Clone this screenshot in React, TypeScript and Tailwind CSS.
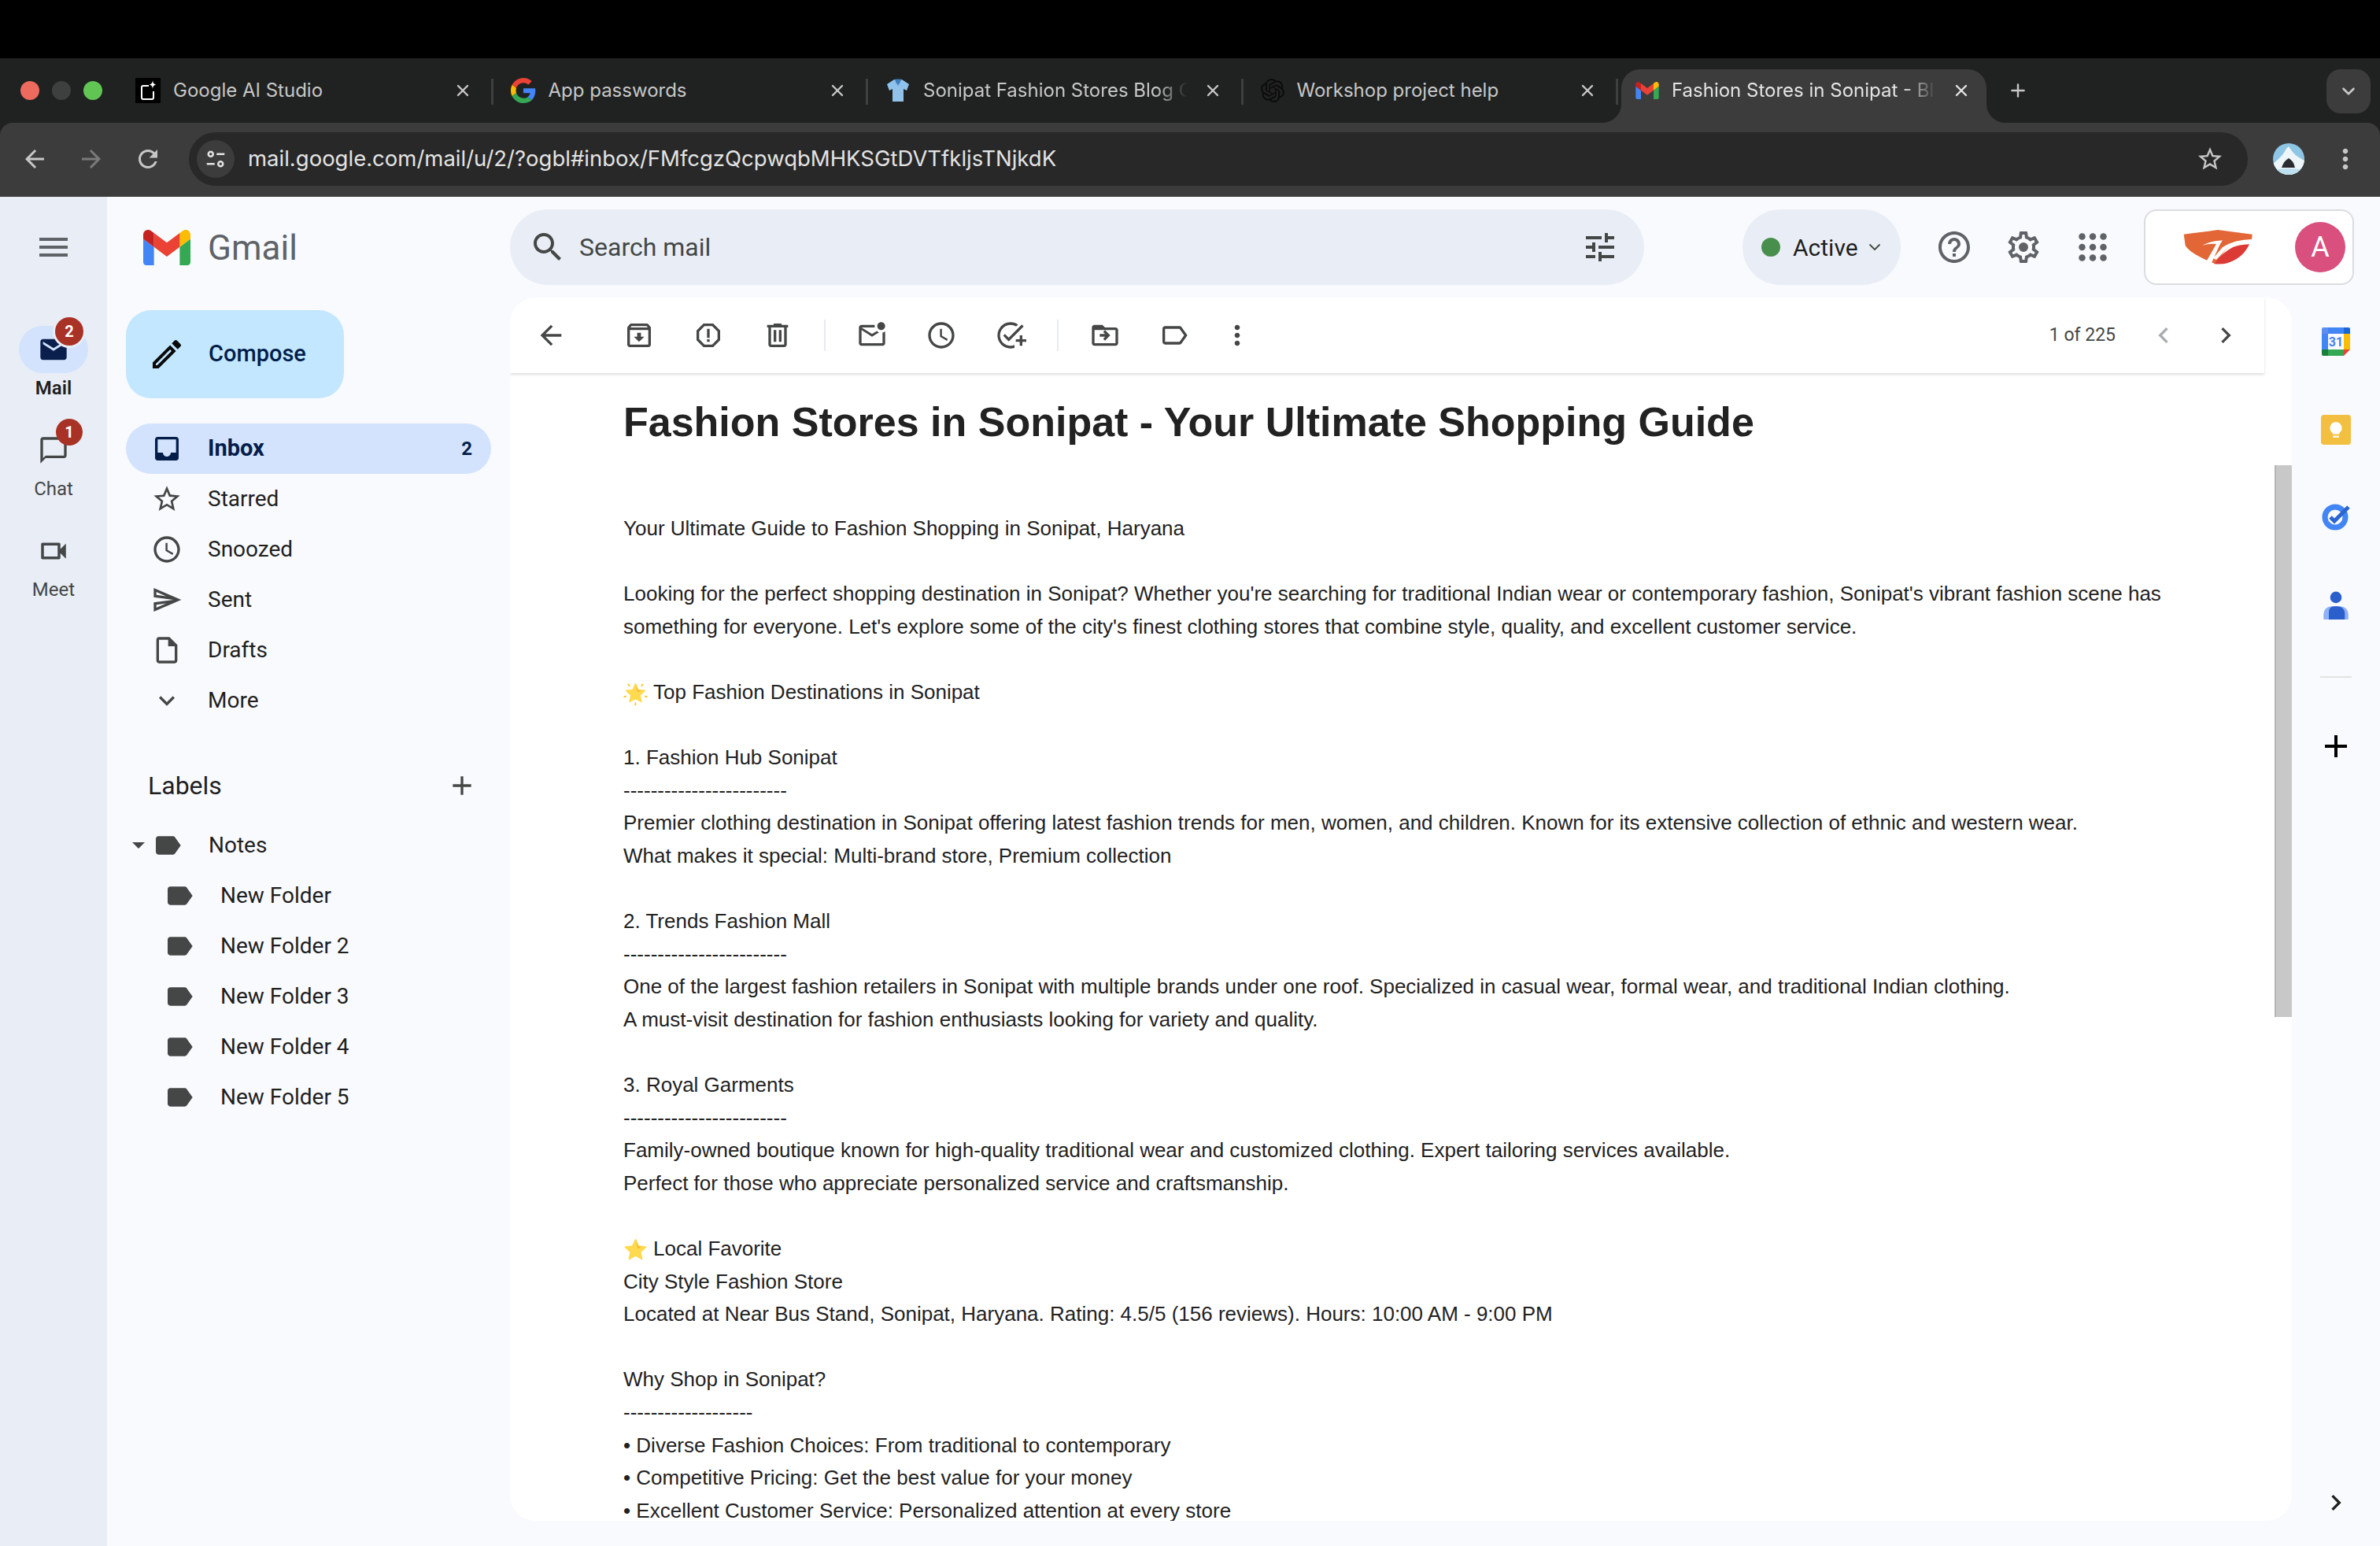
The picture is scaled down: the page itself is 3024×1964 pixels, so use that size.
import { X, Plus, ChevronDown } from "lucide-react";
import { SiOpenai } from "react-icons/si";

const P = {
  menu: "M3 18h18v-2H3v2zm0-5h18v-2H3v2zm0-7v2h18V6H3z",
  search:
    "M15.5 14h-.79l-.28-.27C15.41 12.59 16 11.11 16 9.5 16 5.91 13.09 3 9.5 3S3 5.91 3 9.5 5.91 16 9.5 16c1.61 0 3.09-.59 4.23-1.57l.27.28v.79l5 4.99L20.49 19l-4.99-5zm-6 0C7.01 14 5 11.99 5 9.5S7.01 5 9.5 5 14 7.01 14 9.5 11.99 14 9.5 14z",
  tune: "M3 17v2h6v-2H3zM3 5v2h10V5H3zm10 16v-2h8v-2h-8v-2h-2v6h2zM7 9v2H3v2h4v2h2V9H7zm14 4v-2H11v2h10zm-6-4h2V7h4V5h-4V3h-2v6z",
  help: "M11 18h2v-2h-2v2zm1-16C6.48 2 2 6.48 2 12s4.48 10 10 10 10-4.48 10-10S17.52 2 12 2zm0 18c-4.41 0-8-3.59-8-8s3.59-8 8-8 8 3.59 8 8-3.59 8-8 8zm0-14c-2.21 0-4 1.79-4 4h2c0-1.1.9-2 2-2s2 .9 2 2c0 2-3 1.75-3 5h2c0-2.25 3-2.5 3-5 0-2.21-1.79-4-4-4z",
  gear: "M19.43 12.98c.04-.32.07-.64.07-.98 0-.34-.03-.66-.07-.98l2.11-1.65c.19-.15.24-.42.12-.64l-2-3.46c-.09-.16-.26-.25-.44-.25-.06 0-.12.01-.17.03l-2.49 1c-.52-.4-1.08-.73-1.69-.98l-.38-2.65C14.46 2.18 14.25 2 14 2h-4c-.25 0-.46.18-.49.42l-.38 2.65c-.61.25-1.17.59-1.69.98l-2.49-1c-.06-.02-.12-.03-.18-.03-.17 0-.34.09-.43.25l-2 3.46c-.13.22-.07.49.12.64l2.11 1.65c-.04.32-.07.65-.07.98 0 .33.03.66.07.98l-2.11 1.65c-.19.15-.24.42-.12.64l2 3.46c.09.16.26.25.44.25.06 0 .12-.01.17-.03l2.49-1c.52.4 1.08.73 1.69.98l.38 2.65c.03.24.24.42.49.42h4c.25 0 .46-.18.49-.42l.38-2.65c.61-.25 1.17-.59 1.69-.98l2.49 1c.06.02.12.03.18.03.17 0 .34-.09.43-.25l2-3.46c.12-.22.07-.49-.12-.64l-2.11-1.65zm-1.98-1.71c.04.31.05.52.05.73 0 .21-.02.43-.05.73l-.14 1.13.89.7 1.08.84-.7 1.21-1.27-.51-1.04-.42-.9.68c-.43.32-.84.56-1.25.73l-1.06.43-.16 1.13-.2 1.35h-1.4l-.19-1.35-.16-1.13-1.06-.43c-.43-.18-.83-.41-1.23-.71l-.91-.7-1.06.43-1.27.51-.7-1.21 1.08-.84.89-.7-.14-1.13c-.03-.31-.05-.54-.05-.74s.02-.43.05-.73l.14-1.13-.89-.7-1.08-.84.7-1.21 1.27.51 1.04.42.9-.68c.43-.32.84-.56 1.25-.73l1.06-.43.16-1.13.2-1.35h1.39l.19 1.35.16 1.13 1.06.43c.43.18.83.41 1.23.71l.91.7 1.06-.43 1.27-.51.7 1.21-1.07.85-.89.7.14 1.13zM12 9a3 3 0 1 0 0 6 3 3 0 0 0 0-6z",
  inbox:
    "M19 3H5c-1.1 0-2 .9-2 2v14c0 1.1.9 2 2 2h14c1.1 0 2-.9 2-2V5c0-1.1-.9-2-2-2zm0 12h-4c0 1.66-1.35 3-3 3s-3-1.34-3-3H5V5h14v10z",
  star: "M22 9.24l-7.19-.62L12 2 9.19 8.63 2 9.24l5.46 4.73L5.82 21 12 17.27 18.18 21l-1.63-7.03L22 9.24zM12 15.4l-3.76 2.27 1-4.28-3.32-2.88 4.38-.38L12 6.1l1.71 4.04 4.38.38-3.32 2.88 1 4.28L12 15.4z",
  clock:
    "M11.99 2C6.47 2 2 6.48 2 12s4.47 10 9.99 10C17.52 22 22 17.52 22 12S17.52 2 11.99 2zM12 20c-4.42 0-8-3.58-8-8s3.58-8 8-8 8 3.58 8 8-3.58 8-8 8zm.5-13H11v6l5.25 3.15.75-1.23-4.5-2.67z",
  send: "M4.01 6.03l7.51 3.22-7.52-1 .01-2.22m7.5 8.72L4 17.97v-2.22l7.51-1M2.01 3L2 10l15 2-15 2 .01 7L23 12 2.01 3z",
  draft:
    "M14 2H6c-1.1 0-2 .9-2 2v16c0 1.1.9 2 2 2h12c1.1 0 2-.9 2-2V8l-6-6zm4 18H6V4h7v5h5z",
  expand: "M16.59 8.59L12 13.17 7.41 8.59 6 10l6 6 6-6z",
  label:
    "M17.63 5.84C17.27 5.33 16.67 5 16 5L5 5.01C3.9 5.01 3 5.9 3 7v10c0 1.1.9 1.99 2 1.99L16 19c.67 0 1.27-.33 1.63-.84L22 12l-4.37-6.16z",
  labelOutline:
    "M17.63 5.84C17.27 5.33 16.67 5 16 5L5 5.01C3.9 5.01 3 5.9 3 7v10c0 1.1.9 1.99 2 1.99L16 19c.67 0 1.27-.33 1.63-.84L22 12l-4.37-6.16zM16 17H5V7h11l3.55 5L16 17z",
  plus: "M19 13h-6v6h-2v-6H5v-2h6V5h2v6h6v2z",
  back: "M20 11H7.83l5.59-5.59L12 4l-8 8 8 8 1.41-1.41L7.83 13H20v-2z",
  forward: "M4 11h12.17l-5.59-5.59L12 4l8 8-8 8-1.41-1.41L16.17 13H4v-2z",
  archive:
    "M20.54 5.23l-1.39-1.68C18.88 3.21 18.47 3 18 3H6c-.47 0-.88.21-1.16.55L3.46 5.23C3.17 5.57 3 6.02 3 6.5V19c0 1.1.9 2 2 2h14c1.1 0 2-.9 2-2V6.5c0-.48-.17-.93-.46-1.27zM6.24 5h11.52l.83 1H5.42l.82-1zM5 19V8h14v11H5zm8.45-9h-2.9v3H8l4 4 4-4h-2.55z",
  report:
    "M15.73 3H8.27L3 8.27v7.46L8.27 21h7.46L21 15.73V8.27L15.73 3zM19 14.9L14.9 19H9.1L5 14.9V9.1L9.1 5h5.8L19 9.1v5.8zM11 7h2v7h-2zM11 15h2v2h-2z",
  trash:
    "M15 4V3H9v1H4v2h1v13c0 1.1.9 2 2 2h10c1.1 0 2-.9 2-2V6h1V4h-5zm2 15H7V6h10v13zM9 8h2v9H9zm4 0h2v9h-2z",
  unread:
    "M22 8.98V18c0 1.1-.9 2-2 2H4c-1.1 0-2-.9-2-2V6c0-1.1.9-2 2-2h10.1c-.06.32-.1.66-.1 1s.04.68.1 1H4l8 5 3.67-2.29c.47.43 1.02.76 1.63.98L12 13 4 8v10h16V9.9c.74-.15 1.42-.48 2-.92zM16 5c0 1.66 1.34 3 3 3s3-1.34 3-3-1.34-3-3-3-3 1.34-3 3z",
  addTask:
    "M22 5.18L10.59 16.6l-4.24-4.24 1.41-1.41 2.83 2.83 10-10L22 5.18zM12 20c-4.42 0-8-3.58-8-8s3.58-8 8-8c1.58 0 3.04.46 4.28 1.25l1.44-1.44C16.1 2.67 14.13 2 12 2 6.48 2 2 6.48 2 12s4.48 10 10 10c1.05 0 2.05-.16 3-.46v-2.12c-.93.37-1.94.58-3 .58zM19 15v-3h2v3h3v2h-3v3h-2v-3h-3v-2h3z",
  move: "M20 6h-8l-2-2H4c-1.1 0-2 .9-2 2v12c0 1.1.9 2 2 2h16c1.1 0 2-.9 2-2V8c0-1.1-.9-2-2-2zm0 12H4V8h16v10zm-8-2l4-4-4-4-1.41 1.41L12.17 11H8v2h4.17l-1.58 1.59L12 16z",
  more: "M12 8c1.1 0 2-.9 2-2s-.9-2-2-2-2 .9-2 2 .9 2 2 2zm0 2c-1.1 0-2 .9-2 2s.9 2 2 2 2-.9 2-2-.9-2-2-2zm0 6c-1.1 0-2 .9-2 2s.9 2 2 2 2-.9 2-2-.9-2-2-2z",
  prev: "M15.41 7.41L14 6l-6 6 6 6 1.41-1.41L10.83 12z",
  next: "M10 6L8.59 7.41 13.17 12l-4.58 4.59L10 18l6-6z",
  mail: "M20 4H4c-1.1 0-2 .9-2 2v12c0 1.1.9 2 2 2h16c1.1 0 2-.9 2-2V6c0-1.1-.9-2-2-2zm0 4l-8 5-8-5V6l8 5 8-5v2z",
  chat: "M20 2H4c-1.1 0-2 .9-2 2v18l4-4h14c1.1 0 2-.9 2-2V4c0-1.1-.9-2-2-2zm0 14H6l-2 2V4h16v12z",
  video:
    "M17 10.5V7c0-.55-.45-1-1-1H4c-.55 0-1 .45-1 1v10c0 .55.45 1 1 1h12c.55 0 1-.45 1-1v-3.5l4 4v-11l-4 4zM15 16H5V8h10v8z",
  edit: "M14.06 9.02l.92.92L5.92 19H5v-.92l9.06-9.06M17.66 3c-.25 0-.51.1-.7.29l-1.83 1.83 3.75 3.75 1.83-1.83c.39-.39.39-1.02 0-1.41l-2.34-2.34c-.2-.2-.45-.29-.71-.29zm-3.6 3.19L3 17.25V21h3.75L17.81 9.94l-3.75-3.75z",
  reload:
    "M17.65 6.35C16.2 4.9 14.21 4 12 4c-4.42 0-7.99 3.58-7.99 8s3.57 8 7.99 8c3.73 0 6.84-2.55 7.73-6h-2.08c-.82 2.33-3.04 4-5.65 4-3.31 0-6-2.69-6-6s2.69-6 6-6c1.66 0 3.14.69 4.22 1.78L13 11h7V4l-2.35 2.35z",
};

function Mi({ d, className }: { d: string; className?: string }) {
  return (
    <svg viewBox="0 0 24 24" fill="currentColor" className={className}>
      <path d={d} />
    </svg>
  );
}

function GmailM({ className }: { className?: string }) {
  return (
    <svg viewBox="52 42 88 66" className={className}>
      <path fill="#4285f4" d="M58 108h14V74L52 59v43c0 3.32 2.69 6 6 6" />
      <path fill="#34a853" d="M120 108h14c3.32 0 6-2.69 6-6V59l-20 15" />
      <path fill="#fbbc04" d="M120 48v26l20-15v-8c0-7.42-8.47-11.65-14.4-7.2" />
      <path fill="#ea4335" d="M72 74V48l24 18 24-18v26L96 92" />
      <path fill="#c5221f" d="M52 51v8l20 15V48l-5.6-4.2c-5.94-4.45-14.4-.22-14.4 7.2" />
    </svg>
  );
}

function GoogleG() {
  return (
    <svg viewBox="0 0 48 48" className="w-[32px] h-[32px] shrink-0">
      <path fill="#EA4335" d="M24 9.5c3.54 0 6.71 1.22 9.21 3.6l6.85-6.85C35.9 2.38 30.47 0 24 0 14.62 0 6.51 5.38 2.56 13.22l7.98 6.19C12.43 13.72 17.74 9.5 24 9.5z" />
      <path fill="#4285F4" d="M46.98 24.55c0-1.57-.15-3.09-.38-4.55H24v9.02h12.94c-.58 2.96-2.26 5.48-4.78 7.18l7.73 6c4.51-4.18 7.09-10.36 7.09-17.65z" />
      <path fill="#FBBC05" d="M10.53 28.59c-.48-1.45-.76-2.99-.76-4.59s.27-3.14.76-4.59l-7.98-6.19C.92 16.46 0 20.12 0 24c0 3.88.92 7.54 2.56 10.78l7.97-6.19z" />
      <path fill="#34A853" d="M24 48c6.48 0 11.93-2.13 15.89-5.81l-7.73-6c-2.15 1.45-4.92 2.3-8.16 2.3-6.26 0-11.57-4.22-13.47-9.91l-7.98 6.19C6.51 42.62 14.62 48 24 48z" />
    </svg>
  );
}

function StudioIcon() {
  return (
    <svg viewBox="0 0 32 32" className="w-[32px] h-[32px] shrink-0">
      <rect width="32" height="32" fill="#000" />
      <path d="M17 10H10a2 2 0 0 0-2 2v13a2 2 0 0 0 2 2h11a2 2 0 0 0 2-2V17" fill="none" stroke="#fff" strokeWidth="2" />
      <path d="M22 3c.4 3.6 1.4 4.8 4.5 5.500-3.100.7-4.100 1.900-4.500 5.500-.4-3.600-1.400-4.800-4.500-5.500C20.600 7.800 21.600 6.600 22 3z" fill="#fff" />
    </svg>
  );
}

function ShirtIcon() {
  return (
    <svg viewBox="0 0 32 32" className="w-[32px] h-[32px] shrink-0">
      <path d="M11 2l5 2 5-2 9 6-3 8-4-2v16H9V14l-4 2-3-8z" fill="#90c2ec" />
      <path d="M12 1.500h8l-2 6h-1l-1 3-1-3h-1z" fill="#3f7fbd" />
    </svg>
  );
}

function Tab({ title, icon, fade }: { title: string; icon: React.ReactNode; fade?: boolean }) {
  return (
    <div className="flex items-center w-[476.5px] h-[68px] shrink-0 pl-[22px] pr-[24px] pb-[14px] border-r-[3px] border-[#3e4040] [border-image:linear-gradient(transparent_18%,#3e4040_18%,#3e4040_65%,transparent_65%)_1]">
      {icon}
      <span
        className={
          fade
            ? "ml-[16px] w-[336px] overflow-hidden whitespace-nowrap text-[24px] text-[#c7c7c7] [mask-image:linear-gradient(to_right,black_88%,transparent)]"
            : "ml-[16px] w-[336px] whitespace-nowrap text-[24px] text-[#c7c7c7]"
        }
      >
        {title}
      </span>
      <X className="ml-auto w-[24px] h-[24px] text-[#c7c7c7]" strokeWidth={2.4} />
    </div>
  );
}

function ChromeBar() {
  return (
    <div className="bg-[#202221] font-['Inter',sans-serif]">
      <div className="flex h-[82px] bg-[#3c3c3c]">
        <div className="flex w-[2060px] pt-[14px] bg-[#202221] rounded-br-[24px]">
          <div className="flex items-start w-[150px] pt-[15px] pl-[26px] gap-[16px]">
            <div className="w-[24px] h-[24px] rounded-full bg-[#ec6a5e]" />
            <div className="w-[24px] h-[24px] rounded-full bg-[#3e4040]" />
            <div className="w-[24px] h-[24px] rounded-full bg-[#61c554]" />
          </div>
          <Tab title="Google AI Studio" icon={<StudioIcon />} />
          <Tab title="App passwords" icon={<GoogleG />} />
          <Tab title="Sonipat Fashion Stores Blog Generator" icon={<ShirtIcon />} fade />
          <Tab title="Workshop project help" icon={<SiOpenai className="w-[30px] h-[32px] shrink-0 text-[#0b0b0b]" />} />
        </div>
        <div className="w-[464px] pt-[14px] bg-[#202221]">
          <div className="flex items-center h-[68px] pl-[18px] pr-[20px] pb-[14px] bg-[#3c3c3c] rounded-t-[24px]">
            <GmailM className="w-[30px] h-[22px] shrink-0" />
            <span className="ml-[16px] w-[336px] overflow-hidden whitespace-nowrap text-[24px] text-[#e3e3e3] [mask-image:linear-gradient(to_right,black_88%,transparent)]">
              Fashion Stores in Sonipat - Blog
            </span>
            <X className="ml-auto w-[24px] h-[24px] text-[#e3e3e3]" strokeWidth={2.4} />
          </div>
        </div>
        <div className="flex items-start flex-1 pt-[14px] bg-[#202221] rounded-bl-[24px]">
          <Plus className="mt-[14px] ml-[27px] w-[26px] h-[26px] text-[#c7c7c7]" strokeWidth={2.2} />
          <div className="flex items-center justify-center ml-[379px] w-[56px] h-[56px] rounded-[18px] bg-[#3c3c3c]">
            <ChevronDown className="w-[26px] h-[26px] text-[#c7c7c7]" strokeWidth={2.4} />
          </div>
        </div>
      </div>
      <div className="flex items-center h-[94px] pb-[2px] bg-[#3c3c3c] rounded-t-[16px]">
        <Mi d={P.back} className="ml-[26px] w-[36px] h-[36px] text-[#c7c7c7]" />
        <Mi d={P.forward} className="ml-[36px] w-[36px] h-[36px] text-[#7a7a7a]" />
        <Mi d={P.reload} className="ml-[36px] w-[36px] h-[36px] text-[#c7c7c7]" />
        <div className="flex items-center ml-[34px] w-[2616px] h-[68px] pl-[10px] pr-[30px] rounded-full bg-[#282828]">
          <div className="flex items-center justify-center w-[48px] h-[48px] rounded-full bg-[#3c3c3c]">
            <svg viewBox="0 0 24 24" className="w-[30px] h-[30px]" fill="none" stroke="#e3e3e3" strokeWidth="2">
              <circle cx="7" cy="7" r="2.4" />
              <path d="M13 7h8M3 17h8" />
              <circle cx="17" cy="17" r="2.4" />
            </svg>
          </div>
          <span className="ml-[17px] whitespace-nowrap text-[27.5px] text-[#e3e3e3]">
            mail.google.com/mail/u/2/?ogbl#inbox/FMfcgzQcpwqbMHKSGtDVTfkljsTNjkdK
          </span>
          <Mi d={P.star} className="ml-auto w-[36px] h-[36px] text-[#c7c7c7]" />
        </div>
        <svg viewBox="0 0 40 40" className="ml-[32px] w-[40px] h-[40px] rounded-full shrink-0">
          <rect width="40" height="40" fill="#8ec6e6" />
          <path d="M0 26q10-8 14-14 3-6 6-8 5 8 10 12 6 4 10 6v18H0z" fill="#eef6fa" />
          <path d="M11 31q3-9 9-12 6 3 8 12z" fill="#2a2c30" />
          <path d="M0 34q20-4 40 0v6H0z" fill="#bfe0ef" />
        </svg>
        <Mi d={P.more} className="ml-[32px] w-[40px] h-[40px] text-[#c7c7c7]" />
      </div>
    </div>
  );
}

function LeftRail() {
  return (
    <div className="flex flex-col items-center w-[136px] shrink-0 bg-[#e9eef6] text-[24px] text-[#444746]">
      <div className="flex items-center justify-center h-[128px]">
        <Mi d={P.menu} className="w-[48px] h-[48px] text-[#5f6368]" />
      </div>
      <div className="relative flex flex-col items-center h-[128px] mt-[36px] w-full">
        <div className="flex items-center justify-center w-[88px] h-[60px] rounded-full bg-[#d3e3fd]">
          <Mi d={P.mail} className="w-[40px] h-[40px] text-[#0b1f4d]" />
        </div>
        <span className="mt-[1px] leading-[36px] font-semibold text-[#1f1f1f]">Mail</span>
        <span className="absolute left-[70px] top-[-11px] flex items-center justify-center w-[36px] h-[36px] rounded-full bg-[#a93226] text-[20px] font-bold leading-none text-white ring-[3px] ring-[#e9eef6]">
          2
        </span>
      </div>
      <div className="relative flex flex-col items-center h-[128px] w-full">
        <div className="flex items-center justify-center w-[88px] h-[60px]">
          <Mi d={P.chat} className="w-[40px] h-[40px]" />
        </div>
        <span className="mt-[1px] leading-[36px]">Chat</span>
        <span className="absolute left-[71px] top-[-10px] flex items-center justify-center w-[34px] h-[34px] rounded-full bg-[#a93226] text-[20px] font-bold leading-none text-white">
          1
        </span>
      </div>
      <div className="flex flex-col items-center h-[128px] w-full">
        <div className="flex items-center justify-center w-[88px] h-[60px]">
          <Mi d={P.video} className="w-[42px] h-[42px]" />
        </div>
        <span className="mt-[1px] leading-[36px]">Meet</span>
      </div>
    </div>
  );
}

const navItems = [
  { name: "Starred", d: P.star },
  { name: "Snoozed", d: P.clock },
  { name: "Sent", d: P.send },
  { name: "Drafts", d: P.draft },
  { name: "More", d: P.expand },
];

const folders = ["New Folder", "New Folder 2", "New Folder 3", "New Folder 4", "New Folder 5"];

function Sidebar() {
  return (
    <div className="w-[512px] shrink-0 text-[28px] text-[#1f1f1f]">
      <div className="flex items-center mt-[16px] ml-[24px] w-[277px] h-[112px] pl-[28px] rounded-[32px] bg-[#c2e7ff]">
        <Mi d={P.edit} className="w-[48px] h-[48px] text-[#0a0a0a]" />
        <span className="ml-[29px] text-[29px] font-medium text-[#041e49]">Compose</span>
      </div>
      <div className="flex items-center mt-[32px] ml-[24px] w-[464px] h-[64px] pl-[32px] pr-[24px] rounded-full bg-[#d3e3fd] font-bold text-[#041e49]">
        <Mi d={P.inbox} className="w-[40px] h-[40px]" />
        <span className="ml-[32px] text-[29px]">Inbox</span>
        <span className="ml-auto text-[24px]">2</span>
      </div>
      {navItems.map((item) => (
        <div key={item.name} className="flex items-center ml-[24px] h-[64px] pl-[32px]">
          <Mi d={item.d} className="w-[40px] h-[40px] text-[#444746]" />
          <span className="ml-[32px]">{item.name}</span>
        </div>
      ))}
      <div className="flex items-center justify-between mt-[44px] ml-[52px] w-[419px] h-[64px] text-[32px]">
        <span>Labels</span>
        <Mi d={P.plus} className="w-[40px] h-[40px] text-[#444746]" />
      </div>
      <div className="flex items-center mt-[12px] ml-[32px] h-[64px]">
        <div className="w-0 h-0 border-x-[8px] border-t-[8px] border-x-transparent border-t-[#444746]" />
        <Mi d={P.label} className="ml-[9px] w-[40px] h-[40px] text-[#444746]" />
        <span className="ml-[32px]">Notes</span>
      </div>
      {folders.map((name) => (
        <div key={name} className="flex items-center ml-[72px] h-[64px]">
          <Mi d={P.label} className="w-[40px] h-[40px] text-[#444746]" />
          <span className="ml-[32px]">{name}</span>
        </div>
      ))}
    </div>
  );
}

function ToolIcon({ d }: { d: string }) {
  return (
    <div className="flex items-center justify-center w-[88px] h-[88px] shrink-0">
      <Mi d={d} className="w-[40px] h-[40px] text-[#444746]" />
    </div>
  );
}

const bodyLines = [
  "Your Ultimate Guide to Fashion Shopping in Sonipat, Haryana",
  "",
  "Looking for the perfect shopping destination in Sonipat? Whether you're searching for traditional Indian wear or contemporary fashion, Sonipat's vibrant fashion scene has",
  "something for everyone. Let's explore some of the city's finest clothing stores that combine style, quality, and excellent customer service.",
  "",
  "*Top Fashion Destinations in Sonipat",
  "",
  "1. Fashion Hub Sonipat",
  "------------------------",
  "Premier clothing destination in Sonipat offering latest fashion trends for men, women, and children. Known for its extensive collection of ethnic and western wear.",
  "What makes it special: Multi-brand store, Premium collection",
  "",
  "2. Trends Fashion Mall",
  "------------------------",
  "One of the largest fashion retailers in Sonipat with multiple brands under one roof. Specialized in casual wear, formal wear, and traditional Indian clothing.",
  "A must-visit destination for fashion enthusiasts looking for variety and quality.",
  "",
  "3. Royal Garments",
  "------------------------",
  "Family-owned boutique known for high-quality traditional wear and customized clothing. Expert tailoring services available.",
  "Perfect for those who appreciate personalized service and craftsmanship.",
  "",
  "#Local Favorite",
  "City Style Fashion Store",
  "Located at Near Bus Stand, Sonipat, Haryana. Rating: 4.5/5 (156 reviews). Hours: 10:00 AM - 9:00 PM",
  "",
  "Why Shop in Sonipat?",
  "-------------------",
  "• Diverse Fashion Choices: From traditional to contemporary",
  "• Competitive Pricing: Get the best value for your money",
  "• Excellent Customer Service: Personalized attention at every store",
];

function Star({ glow }: { glow?: boolean }) {
  const shape = (
    <>
      <path
        d="M16 3L19.8 11.7 29.3 12.7 22.2 19 24.2 28.3 16 23.500 7.800 28.300 9.800 19 2.700 12.700 12.200 11.700z"
        fill="#ffd94f"
        stroke="#ffd94f"
        strokeWidth="2"
        strokeLinejoin="round"
      />
      <path d="M16.500 4.500L19.800 11.700 24 12.200 19 15z" fill="#f2b92f" />
    </>
  );
  return (
    <svg viewBox="0 0 32 32" className="inline-block align-[-8px] mr-[7px] w-[31px] h-[31px]">
      {glow ? (
        <>
          <g transform="translate(1.400 1.300) scale(.91)">{shape}</g>
          <path d="M16 28.500V32M6 4l2.500 3M26 4l-2.500 3M.5 21l3.500-1M31.500 21l-3.500-1" stroke="#fcc21b" strokeWidth="1.800" fill="none" />
        </>
      ) : (
        shape
      )}
    </svg>
  );
}

function BodyLine({ text }: { text: string }) {
  if (text === "") return <div className="h-[41.6px]" />;
  if (text[0] === "*" || text[0] === "#") {
    return (
      <div className="h-[41.6px] whitespace-nowrap">
        <Star glow={text[0] === "*"} />
        {text.slice(1)}
      </div>
    );
  }
  return <div className="h-[41.6px] whitespace-nowrap">{text}</div>;
}

function MailCard() {
  return (
    <div className="flex w-[2264px] h-[1554px] shrink-0 overflow-hidden rounded-[32px] bg-white">
      <div className="flex flex-col w-[2229px] shrink-0">
        <div className="flex items-center h-[96px] shrink-0 pl-[8px] pr-[29px] shadow-[0_2px_3px_rgba(60,64,67,0.18)]">
          <ToolIcon d={P.back} />
          <div className="w-[24px]" />
          <ToolIcon d={P.archive} />
          <ToolIcon d={P.report} />
          <ToolIcon d={P.trash} />
          <div className="w-[2px] h-[40px] mx-[15px] bg-[#e8eaed]" />
          <ToolIcon d={P.unread} />
          <ToolIcon d={P.clock} />
          <ToolIcon d={P.addTask} />
          <div className="w-[2px] h-[40px] mx-[15px] bg-[#e8eaed]" />
          <ToolIcon d={P.move} />
          <ToolIcon d={P.labelOutline} />
          <div className="flex items-center justify-center w-[72px] h-[88px] shrink-0">
            <Mi d={P.more} className="w-[40px] h-[40px] text-[#444746]" />
          </div>
          <span className="ml-auto font-['Roboto',sans-serif] text-[23px] text-[#444746]">1 of 225</span>
          <Mi d={P.prev} className="ml-[41px] w-[40px] h-[40px] text-[#a8abaf]" />
          <Mi d={P.next} className="ml-[39px] w-[40px] h-[40px] text-[#444746]" />
        </div>
        <div className="flex-1 overflow-hidden pl-[144px] pt-[32px] font-['Liberation_Sans',Arial,sans-serif] text-[26px] leading-[41.6px] text-[#222222]">
          <h1 className="h-[60px] text-[52px] font-bold leading-[60px] whitespace-nowrap">
            Fashion Stores in Sonipat - Your Ultimate Shopping Guide
          </h1>
          <div className="mt-[85px]">
            {bodyLines.map((line, i) => (
              <BodyLine key={i} text={line} />
            ))}
          </div>
        </div>
      </div>
      <div className="ml-[13px] mt-[213px] w-[22px] h-[701px] bg-[#c8c8c8] border-l-2 border-[#b4b4b4]" />
    </div>
  );
}

function RightRail() {
  return (
    <div className="flex flex-col items-center w-[112px] shrink-0 text-black">
      <svg viewBox="0 0 36 36" className="mt-[37px] w-[36px] h-[38px]">
        <path d="M8 0h20v8H8z" fill="#4285f4" />
        <path d="M0 8a8 8 0 0 1 8-8v28H0z" fill="#4285f4" />
        <path d="M2 0h6v8H0V2a2 2 0 0 1 2-2z" fill="#5a8fef" />
        <path d="M28 0h6a2 2 0 0 1 2 2v6h-8z" fill="#1967d2" />
        <path d="M28 8h8v20h-8z" fill="#fbbc04" />
        <path d="M8 28h20v8H8z" fill="#34a853" />
        <path d="M0 28h8v8H2a2 2 0 0 1-2-2z" fill="#188038" />
        <path d="M28 28h8l-8 8z" fill="#ea4335" />
        <text x="18" y="24" fontSize="16" fontWeight="700" textAnchor="middle" fill="#4285f4" fontFamily="Roboto">31</text>
      </svg>
      <div className="flex items-center justify-center mt-[74px] w-[38px] h-[38px] rounded-[4px] bg-[#f3bf41]">
        <svg viewBox="0 0 24 24" className="w-[26px] h-[26px]" fill="#fff">
          <path d="M12 3a7 7 0 0 0-4 12.700V17h8v-1.300A7 7 0 0 0 12 3z" />
          <path d="M8.500 19h7v2h-7z" />
        </svg>
      </div>
      <svg viewBox="0 0 36 36" className="mt-[73px] w-[36px] h-[36px]">
        <circle cx="17" cy="19" r="13" fill="none" stroke="#4285f4" strokeWidth="7" />
        <path d="M11 19l5 5 18-18" fill="none" stroke="#2b66d0" strokeWidth="5" />
      </svg>
      <svg viewBox="0 0 32 32" className="mt-[77px] w-[36px] h-[36px]">
        <circle cx="16" cy="7" r="6.500" fill="#2b5fcb" />
        <path d="M2 32v-6a9 9 0 0 1 9-9h10a9 9 0 0 1 9 9v6z" fill="#8fb1f7" />
        <path d="M8 32V23a6 6 0 0 1 6-6h4a8 8 0 0 1 8 8v7z" fill="#2b5fcb" />
      </svg>
      <div className="mt-[72px] w-[40px] h-[2px] bg-[#e3e3e3]" />
      <Mi d={P.plus} className="mt-[63px] w-[48px] h-[48px]" />
      <Mi d={P.next} className="mt-[917px] w-[40px] h-[40px] text-[#1f1f1f]" />
    </div>
  );
}

function Header() {
  return (
    <div className="flex h-[128px] shrink-0 font-['Roboto',sans-serif]">
      <div className="flex items-center w-[512px] shrink-0 pl-[46px]">
        <GmailM className="w-[60px] h-[45px]" />
        <span className="ml-[22px] pt-[2px] text-[44px] leading-none text-[#5f6368]">Gmail</span>
      </div>
      <div className="flex items-center mt-[16px] w-[1441px] h-[96px] shrink-0 pl-[24px] pr-[32px] rounded-full bg-[#e9eef6]">
        <Mi d={P.search} className="w-[48px] h-[48px] text-[#444746]" />
        <span className="ml-[16px] text-[32px] text-[#444746]">Search mail</span>
        <Mi d={P.tune} className="ml-auto w-[48px] h-[48px] text-[#444746]" />
      </div>
      <div className="flex items-center mt-[16px] ml-[125px] w-[201px] h-[96px] shrink-0 pl-[24px] rounded-full bg-[#e9eef6]">
        <div className="w-[24px] h-[24px] rounded-full bg-[#488e4c]" />
        <span className="ml-[16px] text-[30px] text-[#1f1f1f]">Active</span>
        <ChevronDown className="ml-[9px] w-[24px] h-[24px] text-[#444746]" strokeWidth={1.8} />
      </div>
      <div className="flex items-center justify-center ml-[24px] w-[88px] h-[128px] shrink-0">
        <Mi d={P.help} className="w-[48px] h-[48px] text-[#5f6368]" />
      </div>
      <div className="flex items-center justify-center w-[88px] h-[128px] shrink-0">
        <Mi d={P.gear} className="w-[48px] h-[48px] text-[#5f6368]" />
      </div>
      <div className="flex items-center justify-center w-[88px] h-[128px] shrink-0">
        <svg viewBox="0 0 32 32" className="w-[36px] h-[36px]" fill="#5f6368">
          {[4, 16, 28].map((y) =>
            [4, 16, 28].map((x) => <circle key={`${x}-${y}`} cx={x} cy={y} r="3.8" />),
          )}
        </svg>
      </div>
      <div className="flex items-center mt-[16px] ml-[21px] w-[267px] h-[96px] shrink-0 pl-[48px] rounded-[16px] bg-white border-2 border-[#dadce0]">
        <svg viewBox="0 0 88 44" className="w-[88px] h-[44px] shrink-0">
          <path d="M0.7 5.7Q24 3 44 0Q66 3 87.7 5.7L87 12L60 18L40 43Q8 30 2.7 20z" fill="#e36636" />
          <path d="M24 20Q36 13 50 13.500Q47 17 45 22L36 42L30 39L42 18Q33 17 24 20z" fill="#fff" />
          <path d="M50 22Q66 12 87 12L87 15Q68 16 57 22L42 38L38 36z" fill="#fff" />
          <path d="M84 18.300Q70 19 62.700 22.300Q48 30 39.300 43.300Q50 44 56 42.300Q76 36 84 18.300z" fill="#dc3a35" />
        </svg>
        <div className="flex items-center justify-center ml-[54px] w-[64px] h-[64px] shrink-0 rounded-full bg-[#d94f7d] text-[36px] text-white">
          A
        </div>
      </div>
    </div>
  );
}

export default function App() {
  return (
    <div className="w-[3024px] h-[1964px] overflow-hidden bg-black font-['Roboto',sans-serif]">
      <div className="h-[74px]" />
      <ChromeBar />
      <div className="flex h-[1714px] bg-[#f8fafd]">
        <LeftRail />
        <div className="flex flex-col flex-1 min-w-0">
          <Header />
          <div className="flex flex-1 min-h-0">
            <Sidebar />
            <MailCard />
            <RightRail />
          </div>
        </div>
      </div>
    </div>
  );
}
